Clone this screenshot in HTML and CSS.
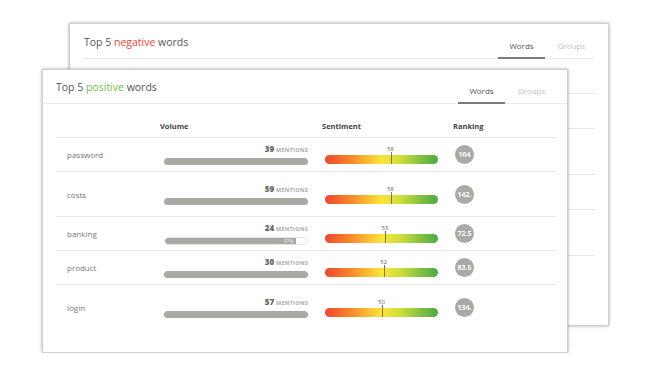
FILE: index.html
```html
<!DOCTYPE html>
<html lang="en">
<head>
    <meta charset="UTF-8">
    <title>Top words</title>
    <link rel="stylesheet" href="styles.css">
</head>
<body>
<div class="stage">
    <!-- Back card: negative words -->
    <section class="card card-back">
        <header class="card-head">
            <h2 class="card-title">Top 5 <span class="neg">negative</span> words</h2>
            <nav class="tabs">
                <span class="tab active">Words</span>
                <span class="tab">Groups</span>
            </nav>
        </header>
        <div class="ghost">
            <div class="ghost-row"></div>
            <div class="ghost-row"></div>
            <div class="ghost-row tall"></div>
            <div class="ghost-row"></div>
            <div class="ghost-row tall"></div>
        </div>
    </section>

    <!-- Front card: positive words -->
    <section class="card card-front">
        <header class="card-head">
            <h2 class="card-title">Top 5 <span class="pos">positive</span> words</h2>
            <nav class="tabs">
                <span class="tab active">Words</span>
                <span class="tab">Groups</span>
            </nav>
        </header>
        <div class="table">
            <div class="row head">
                <div></div>
                <div>Volume</div>
                <div>Sentiment</div>
                <div>Ranking</div>
            </div>

            <div class="row">
                <div class="word">password</div>
                <div class="vol">
                    <div class="mentions"><b>39</b> mentions</div>
                    <div class="vol-bar"></div>
                </div>
                <div class="sent">
                    <span class="sent-val" style="left:58%">58</span>
                    <div class="sent-bar"><i class="mark" style="left:58%"></i></div>
                </div>
                <div><span class="rank">104</span></div>
            </div>

            <div class="row tall">
                <div class="word">costs</div>
                <div class="vol">
                    <div class="mentions"><b>59</b> mentions</div>
                    <div class="vol-bar"></div>
                </div>
                <div class="sent">
                    <span class="sent-val" style="left:58%">58</span>
                    <div class="sent-bar"><i class="mark" style="left:58%"></i></div>
                </div>
                <div><span class="rank">142.</span></div>
            </div>

            <div class="row">
                <div class="word">banking</div>
                <div class="vol">
                    <div class="mentions"><b>24</b> mentions</div>
                    <div class="vol-bar partial"><div class="fill" style="width:92%"><span>97%</span></div></div>
                </div>
                <div class="sent">
                    <span class="sent-val" style="left:53%">53</span>
                    <div class="sent-bar"><i class="mark" style="left:53%"></i></div>
                </div>
                <div><span class="rank">72.5</span></div>
            </div>

            <div class="row">
                <div class="word">product</div>
                <div class="vol">
                    <div class="mentions"><b>30</b> mentions</div>
                    <div class="vol-bar"></div>
                </div>
                <div class="sent">
                    <span class="sent-val" style="left:52%">52</span>
                    <div class="sent-bar"><i class="mark" style="left:52%"></i></div>
                </div>
                <div><span class="rank">83.5</span></div>
            </div>

            <div class="row last">
                <div class="word">login</div>
                <div class="vol">
                    <div class="mentions"><b>57</b> mentions</div>
                    <div class="vol-bar"></div>
                </div>
                <div class="sent">
                    <span class="sent-val" style="left:50%">50</span>
                    <div class="sent-bar"><i class="mark" style="left:50%"></i></div>
                </div>
                <div><span class="rank">134.</span></div>
            </div>
        </div>
    </section>
</div>
</body>
</html>
```

FILE: styles.css
```css
* {
    box-sizing: border-box;
}
body {
    margin: 0;
    background-color: #fff;
    font-family: 'Open Sans', 'Liberation Sans', sans-serif;
    color: #555;
}
.stage {
    display: grid;
}
.card {
    grid-area: 1 / 1;
    align-self: start;
    justify-self: start;
    background-color: #fff;
    border: 1px solid #cfcfcf;
    box-shadow: 0 0 3px rgba(0,0,0,0.35);
}
.card-back {
    margin: 23px 0 0 69px;
    width: 540px;
    height: 303px;
    padding: 0 13px;
}
.card-front {
    margin: 69px 0 0 42px;
    width: 526px;
    height: 284px;
}
.card-head {
    display: flex;
    justify-content: space-between;
    height: 35px;
    border-bottom: 1px solid #ebebeb;
}
.card-front .card-head {
    height: 34px;
    padding: 0 12px 0 13px;
}
.card-title {
    margin: 0;
    padding-top: 10px;
    font-size: 10.5px;
    font-weight: normal;
    color: #555;
}
.card-back .card-title {
    padding-left: 1px;
    padding-top: 11px;
}
.neg {
    color: #f2453d;
}
.pos {
    color: #6cbf4f;
}
.tabs {
    display: flex;
    gap: 3px;
    align-self: flex-end;
    margin-bottom: -1px;
}
.tab {
    width: 47px;
    text-align: center;
    font-size: 8px;
    color: #c2c2c2;
    padding-bottom: 6px;
    border-bottom: 2px solid transparent;
}
.tab.active {
    color: #555;
    border-bottom-color: #7a7a7a;
}
.ghost-row {
    height: 35px;
    border-bottom: 1px solid #e6e6e6;
}
.ghost-row.tall {
    height: 46px;
}

/* table */
.table {
    padding: 0 11px 0 13px;
}
.row {
    display: grid;
    grid-template-columns: 104px 162px 131px 1fr;
    align-items: center;
    height: 34px;
    border-bottom: 1px solid #e6e6e6;
}
.row.tall {
    height: 45px;
}
.row.last {
    height: 45px;
    border-bottom: none;
}
.row.head {
    align-items: end;
    padding-bottom: 6px;
    font-size: 7.5px;
    font-weight: bold;
    color: #444;
}
.word {
    padding-left: 11px;
    font-size: 8px;
    color: #777;
}
.vol {
    padding-left: 4px;
    width: 148px;
}
.mentions {
    text-align: right;
    font-size: 5.5px;
    font-weight: bold;
    text-transform: uppercase;
    letter-spacing: 0.3px;
    color: #aaa;
    margin-bottom: 3px;
    line-height: 9px;
}
.mentions b {
    font-size: 8px;
    letter-spacing: 0;
    color: #666;
}
.vol-bar {
    height: 7px;
    border-radius: 4px;
    background-color: #aaa9a3;
}
.vol-bar.partial {
    background-color: #fff;
    border: 1px solid #e3e3e3;
    height: 8px;
    overflow: hidden;
}
.fill {
    height: 100%;
    background-color: #aaa9a3;
    border-radius: 4px 0 0 4px;
    text-align: right;
    font-size: 5px;
    line-height: 7px;
    color: #eee;
}
.fill span {
    padding-right: 2px;
}
.sent {
    position: relative;
    margin-left: 3px;
    width: 113px;
    padding-top: 10px;
}
.sent-val {
    position: absolute;
    top: 0;
    transform: translateX(-50%);
    font-size: 6px;
    line-height: 8px;
    color: #666;
}
.sent-bar {
    position: relative;
    height: 9px;
    border-radius: 5px;
    background: linear-gradient(to right, #ef4530 0%, #f7902a 25%, #fbe53a 50%, #c9dd3a 68%, #86c23f 84%, #4aab43 100%);
}
.mark {
    position: absolute;
    top: -3px;
    bottom: 0;
    width: 1px;
    background-color: #7b7a3c;
}
.rank {
    display: flex;
    align-items: center;
    justify-content: center;
    margin-left: 2px;
    width: 19px;
    height: 19px;
    border-radius: 50%;
    background-color: #aba9a4;
    color: #fff;
    font-size: 7px;
    font-weight: bold;
}
```
